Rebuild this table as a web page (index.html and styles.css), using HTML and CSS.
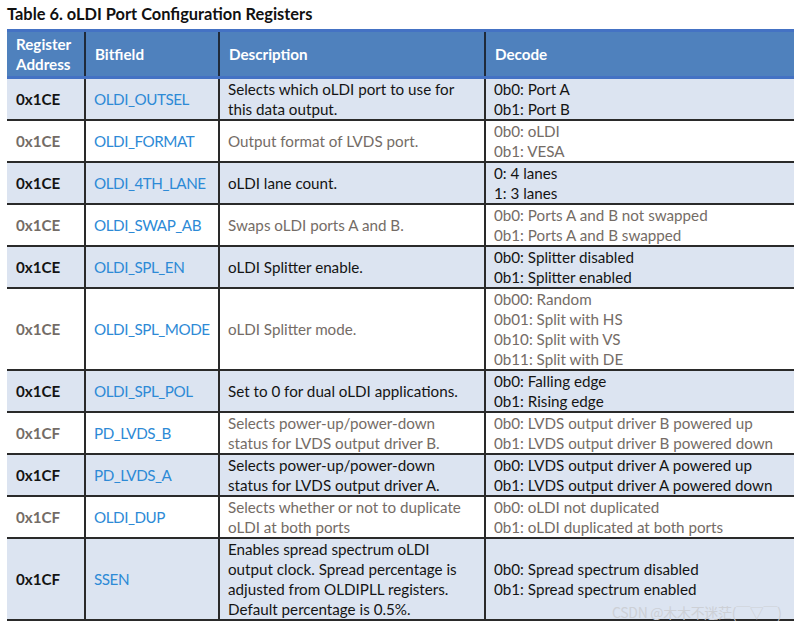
FILE: index.html
```html
<!DOCTYPE html>
<html>
<head>
<meta charset="utf-8">
<link rel="stylesheet" href="styles.css">
</head>
<body>
<div class="page">
  <h1 class="title">Table 6. oLDI Port Configuration Registers</h1>
  <table class="reg">
    <colgroup>
      <col class="c-addr"><col class="c-bit"><col class="c-desc"><col class="c-dec">
    </colgroup>
    <thead>
      <tr><th>Register<br>Address</th><th>Bitfield</th><th>Description</th><th>Decode</th></tr>
    </thead>
    <tbody>
      <tr class="shade"><td class="addr">0x1CE</td><td class="bit">OLDI_OUTSEL</td><td>Selects which oLDI port to use for<br>this data output.</td><td>0b0: Port A<br>0b1: Port B</td></tr>
      <tr class="plain"><td class="addr">0x1CE</td><td class="bit">OLDI_FORMAT</td><td>Output format of LVDS port.</td><td>0b0: oLDI<br>0b1: VESA</td></tr>
      <tr class="shade"><td class="addr">0x1CE</td><td class="bit">OLDI_4TH_LANE</td><td>oLDI lane count.</td><td>0: 4 lanes<br>1: 3 lanes</td></tr>
      <tr class="plain"><td class="addr">0x1CE</td><td class="bit">OLDI_SWAP_AB</td><td>Swaps oLDI ports A and B.</td><td>0b0: Ports A and B not swapped<br>0b1: Ports A and B swapped</td></tr>
      <tr class="shade"><td class="addr">0x1CE</td><td class="bit">OLDI_SPL_EN</td><td>oLDI Splitter enable.</td><td>0b0: Splitter disabled<br>0b1: Splitter enabled</td></tr>
      <tr class="plain"><td class="addr">0x1CE</td><td class="bit">OLDI_SPL_MODE</td><td>oLDI Splitter mode.</td><td>0b00: Random<br>0b01: Split with HS<br>0b10: Split with VS<br>0b11: Split with DE</td></tr>
      <tr class="shade"><td class="addr">0x1CE</td><td class="bit">OLDI_SPL_POL</td><td>Set to 0 for dual oLDI applications.</td><td>0b0: Falling edge<br>0b1: Rising edge</td></tr>
      <tr class="plain"><td class="addr">0x1CF</td><td class="bit">PD_LVDS_B</td><td>Selects power-up/power-down<br>status for LVDS output driver B.</td><td>0b0: LVDS output driver B powered up<br>0b1: LVDS output driver B powered down</td></tr>
      <tr class="shade"><td class="addr">0x1CF</td><td class="bit">PD_LVDS_A</td><td>Selects power-up/power-down<br>status for LVDS output driver A.</td><td>0b0: LVDS output driver A powered up<br>0b1: LVDS output driver A powered down</td></tr>
      <tr class="plain"><td class="addr">0x1CF</td><td class="bit">OLDI_DUP</td><td>Selects whether or not to duplicate<br>oLDI at both ports</td><td>0b0: oLDI not duplicated<br>0b1: oLDI duplicated at both ports</td></tr>
      <tr class="shade"><td class="addr">0x1CF</td><td class="bit">SSEN</td><td>Enables spread spectrum oLDI<br>output clock. Spread percentage is<br>adjusted from OLDIPLL registers.<br>Default percentage is 0.5%.</td><td>0b0: Spread spectrum disabled<br>0b1: Spread spectrum enabled</td></tr>
    </tbody>
  </table>
  <div class="watermark">CSDN @木木不迷茫(￣▽￣)</div>
</div>
</body>
</html>
```

FILE: styles.css
```css
html, body {
  margin: 0;
  padding: 0;
  background: #ffffff;
}
body {
  font-family: Lato, "Noto Sans", sans-serif;
}
.page {
  position: relative;
  padding: 4px 7px 0 7px;
  width: 787px;
}
.title {
  margin: 0 0 5px 0;
  font-size: 16.4px;
  font-weight: 700;
  line-height: 20px;
  color: #111111;
}
.reg {
  border-collapse: collapse;
  width: 787px;
  table-layout: fixed;
  font-size: 15.2px;
}
.c-addr { width: 78px; }
.c-bit { width: 134px; }
.c-desc { width: 266px; }
.c-dec { width: 309px; }

.reg thead th {
  background: #4f81bd;
  color: #ffffff;
  font-weight: 700;
  text-align: left;
  line-height: 20px;
  padding: 1px 8px 1px 9px;
  height: 42px;
  border-top: 3px solid #4472c4;
  border-bottom: 3px solid #4472c4;
  border-left: 2px solid #1f2a3a;
}
.reg thead th:first-child { border-left: none; }

.reg td {
  line-height: 20px;
  padding: 0 4px 0 8px;
  vertical-align: middle;
  border-top: 2px solid #2a2a2a;
  border-left: 2px solid #2a2a2a;
  white-space: nowrap;
}
.reg tbody tr:first-child td { border-top: none; }
.reg tbody tr:last-child td { border-bottom: 2px solid #2a2a2a; }
.reg td:first-child { border-left: none; padding-left: 9px; }
.reg td.bit { padding-left: 8px; padding-right: 0; letter-spacing: -0.45px; }

.shade td { background: #dce4f1; color: #141414; }
.plain td { background: #ffffff; color: #746c66; }
.reg td.addr { font-weight: 700; }
.reg td.bit { color: #2d8ad6; }

.watermark {
  position: absolute;
  left: 612px;
  top: 602px;
  font-size: 14px;
  color: #cdd0d6;
  font-family: "Noto Sans CJK SC", sans-serif;
  letter-spacing: -0.3px;
}
```
